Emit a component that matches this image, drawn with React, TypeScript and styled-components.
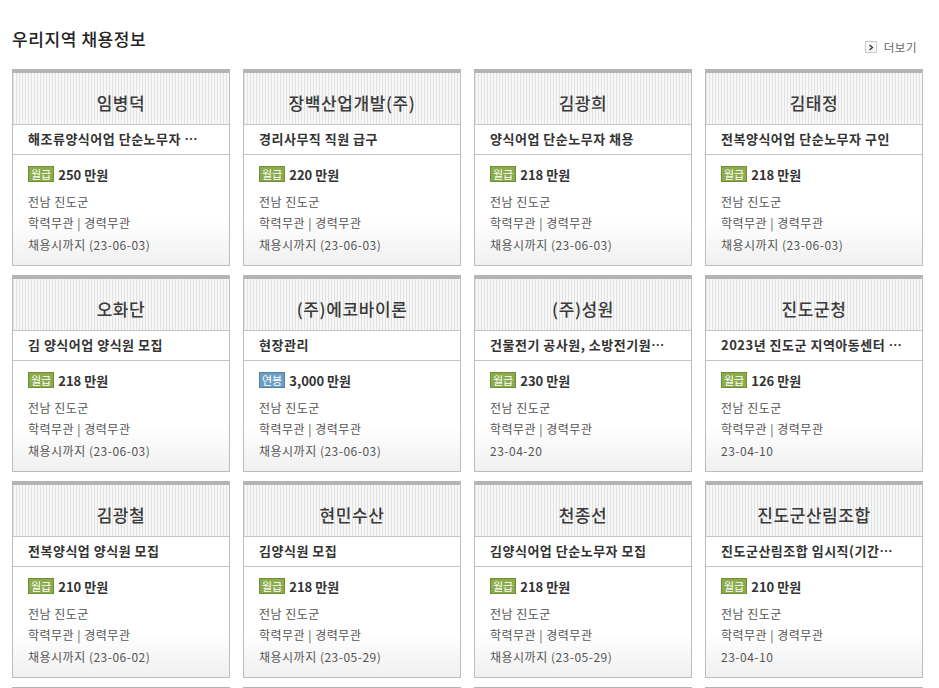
import React from "react";
import styled, { createGlobalStyle } from "styled-components";

const Global = createGlobalStyle`
  html, body { margin: 0; padding: 0; background: #fff; }
  body { font-family: "Noto Sans CJK KR", "Noto Sans", sans-serif; color: #333; }
`;

type Job = {
  name: string;
  title: string;
  kind: "월급" | "연봉";
  pay: string;
  place: string;
  cond: string;
  until: string;
};

const jobs: Job[] = [
  { name: "임병덕", title: "해조류양식어업 단순노무자 ⋯", kind: "월급", pay: "250 만원", place: "전남 진도군", cond: "학력무관 | 경력무관", until: "채용시까지 (23-06-03)" },
  { name: "장백산업개발(주)", title: "경리사무직 직원 급구", kind: "월급", pay: "220 만원", place: "전남 진도군", cond: "학력무관 | 경력무관", until: "채용시까지 (23-06-03)" },
  { name: "김광희", title: "양식어업 단순노무자 채용", kind: "월급", pay: "218 만원", place: "전남 진도군", cond: "학력무관 | 경력무관", until: "채용시까지 (23-06-03)" },
  { name: "김태정", title: "전복양식어업 단순노무자 구인", kind: "월급", pay: "218 만원", place: "전남 진도군", cond: "학력무관 | 경력무관", until: "채용시까지 (23-06-03)" },
  { name: "오화단", title: "김 양식어업 양식원 모집", kind: "월급", pay: "218 만원", place: "전남 진도군", cond: "학력무관 | 경력무관", until: "채용시까지 (23-06-03)" },
  { name: "(주)에코바이론", title: "현장관리", kind: "연봉", pay: "3,000 만원", place: "전남 진도군", cond: "학력무관 | 경력무관", until: "채용시까지 (23-06-03)" },
  { name: "(주)성원", title: "건물전기 공사원, 소방전기원⋯", kind: "월급", pay: "230 만원", place: "전남 진도군", cond: "학력무관 | 경력무관", until: "23-04-20" },
  { name: "진도군청", title: "2023년 진도군 지역아동센터 ⋯", kind: "월급", pay: "126 만원", place: "전남 진도군", cond: "학력무관 | 경력무관", until: "23-04-10" },
  { name: "김광철", title: "전복양식업 양식원 모집", kind: "월급", pay: "210 만원", place: "전남 진도군", cond: "학력무관 | 경력무관", until: "채용시까지 (23-06-02)" },
  { name: "현민수산", title: "김양식원 모집", kind: "월급", pay: "218 만원", place: "전남 진도군", cond: "학력무관 | 경력무관", until: "채용시까지 (23-05-29)" },
  { name: "천종선", title: "김양식어업 단순노무자 모집", kind: "월급", pay: "218 만원", place: "전남 진도군", cond: "학력무관 | 경력무관", until: "채용시까지 (23-05-29)" },
  { name: "진도군산림조합", title: "진도군산림조합 임시직(기간⋯", kind: "월급", pay: "210 만원", place: "전남 진도군", cond: "학력무관 | 경력무관", until: "23-04-10" },
];

const Page = styled.div`
  padding: 28px 0 0 12px;
  height: 688px;
  overflow: hidden;
  box-sizing: border-box;
`;

const TopBar = styled.div`
  width: 911px;
  display: flex;
  justify-content: space-between;
  align-items: flex-end;
  height: 30px;
  margin-bottom: 11px;
`;

const Heading = styled.h2`
  margin: 0;
  font-size: 17px;
  font-weight: 500;
  color: #222;
  line-height: 22px;
  letter-spacing: 0.6px;
  align-self: flex-start;
`;

const More = styled.a`
  display: flex;
  align-items: center;
  gap: 7px;
  font-size: 11.5px;
  color: #666;
  text-decoration: none;
  margin-bottom: 3px;
  margin-right: 6px;
  letter-spacing: 0.5px;
`;

const MoreIcon = styled.span`
  width: 10px;
  height: 10px;
  border: 1px solid #c8c8c8;
  display: flex;
  align-items: center;
  justify-content: center;
  background: #fafafa;
`;

const Grid = styled.div`
  display: grid;
  grid-template-columns: repeat(4, 218px);
  column-gap: 13px;
  row-gap: 9px;
`;

const Card = styled.div`
  border: 1px solid #bdbdbd;
  border-top: 4px solid #b4b4b4;
  height: 192px;
  display: flex;
  flex-direction: column;
`;

const NameBox = styled.div`
  height: 52px;
  padding-top: 7px;
  box-sizing: border-box;
  display: flex;
  align-items: center;
  justify-content: center;
  font-size: 17px;
  font-weight: 500;
  color: #3a3a3a;
  letter-spacing: 0.6px;
  background: repeating-linear-gradient(
    90deg,
    #e2e2e2 0px,
    #e2e2e2 1px,
    #f8f8f8 1px,
    #f8f8f8 3px
  );
  border-bottom: 1px solid #c4c4c4;
`;

const Title = styled.div`
  height: 29px;
  line-height: 27px;
  padding: 0 15px;
  font-size: 13px;
  font-weight: 700;
  color: #333;
  letter-spacing: 0.5px;
  white-space: nowrap;
  overflow: hidden;
  border-bottom: 1px solid #c4c4c4;
`;

const Body = styled.div`
  flex: 1;
  padding: 9px 15px 0;
  background: linear-gradient(to bottom, #fff 60%, #f0f0f0 100%);
  font-size: 12px;
  color: #555;
  letter-spacing: 0.5px;
`;

const Pay = styled.div`
  display: flex;
  align-items: center;
  gap: 4px;
  height: 20px;
  margin-bottom: 6.5px;
  font-size: 13px;
  font-weight: 700;
  color: #333;
  letter-spacing: 0;
`;

const Badge = styled.span<{ $kind: "월급" | "연봉" }>`
  display: inline-flex;
  align-items: center;
  justify-content: center;
  height: 14px;
  padding: 0 2px;
  font-size: 11px;
  font-weight: 400;
  color: #fff;
  border: 1px solid ${(p) => (p.$kind === "월급" ? "#6f8f35" : "#4f82a8")};
  background: ${(p) => (p.$kind === "월급" ? "#8cab4c" : "#6d9fc5")};
`;

const Line = styled.div`
  line-height: 21.5px;
  white-space: nowrap;
`;

export default function App() {
  return (
    <>
      <Global />
      <Page>
        <TopBar>
          <Heading>우리지역 채용정보</Heading>
          <More href="#">
            <MoreIcon>
              <svg width="6" height="7" viewBox="0 0 6 7">
                <path d="M1.5 1 L4.5 3.5 L1.5 6" fill="none" stroke="#333" strokeWidth="1.3" />
              </svg>
            </MoreIcon>
            더보기
          </More>
        </TopBar>
        <Grid>
          {jobs.map((j, i) => (
            <Card key={i}>
              <NameBox>{j.name}</NameBox>
              <Title>{j.title}</Title>
              <Body>
                <Pay>
                  <Badge $kind={j.kind}>{j.kind}</Badge>
                  {j.pay}
                </Pay>
                <Line>{j.place}</Line>
                <Line>{j.cond}</Line>
                <Line>{j.until}</Line>
              </Body>
            </Card>
          ))}
          {[0, 1, 2, 3].map((k) => (
            <Card key={"n" + k} />
          ))}
        </Grid>
      </Page>
    </>
  );
}
